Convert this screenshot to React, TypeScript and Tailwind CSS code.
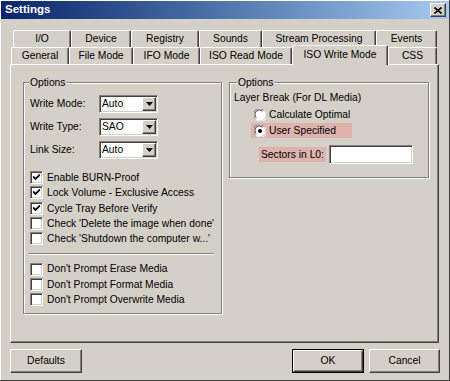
import clsx from "clsx";

const raised =
  "border border-t-white border-l-white border-r-[#404040] border-b-[#404040] shadow-[inset_-1px_-1px_0_#808080]";
const sunken =
  "border border-t-[#808080] border-l-[#808080] border-r-white border-b-white shadow-[inset_1px_1px_0_#404040,inset_-1px_-1px_0_#d4d0c8]";
const etched = "border border-[#808080] shadow-[inset_1px_1px_0_#fff,1px_1px_0_#fff]";

const backTabs = [
  { label: "I/O", w: "w-[58px]" },
  { label: "Device", w: "w-[60px]" },
  { label: "Registry", w: "w-[68px]" },
  { label: "Sounds", w: "w-[63px]" },
  { label: "Stream Processing", w: "w-[114px]" },
  { label: "Events", w: "w-[61px]" },
];

const frontTabs = [
  { label: "General", w: "w-[58px]" },
  { label: "File Mode", w: "w-[64px]" },
  { label: "IFO Mode", w: "w-[67px]" },
  { label: "ISO Read Mode", w: "w-[92px]" },
  { label: "ISO Write Mode", w: "w-[96px]", active: true },
  { label: "CSS", w: "w-[49px]" },
];

const Tab = ({ label, w, active }: { label: string; w: string; active?: boolean }) => (
  <div
    className={clsx(
      "flex items-center justify-center whitespace-nowrap bg-[#d4d0c8] rounded-t-[2px] border-l border-t border-r border-l-white border-t-white border-r-[#404040] shadow-[inset_-1px_0_0_#808080]",
      w,
      active ? "relative z-10 -mt-[2px] h-[20px] pb-[2px]" : "h-[17px]"
    )}
  >
    {label}
  </div>
);

const Combo = ({ value }: { value: string }) => (
  <div className={clsx("flex h-[18px] w-[59px] bg-white", sunken)}>
    <span className="flex-1 pl-[2px] pt-[1px] leading-[14px]">{value}</span>
    <div className={clsx("m-[1px] flex w-[14px] items-center justify-center bg-[#d4d0c8]", raised)}>
      <svg width="7" height="4" viewBox="0 0 7 4">
        <path d="M0 0h7L3.5 4z" fill="#000" />
      </svg>
    </div>
  </div>
);

const Check = ({ label, checked }: { label: string; checked?: boolean }) => (
  <div className="flex h-[15.3px] items-center">
    <div className={clsx("flex h-[13px] w-[13px] shrink-0 items-center justify-center bg-white", sunken)}>
      {checked && (
        <svg width="7" height="7" viewBox="0 0 7 7">
          <path d="M0 2.5l2.5 2.5L7 0.5" fill="none" stroke="#000" strokeWidth="1.8" />
        </svg>
      )}
    </div>
    <span className="ml-[4px] whitespace-nowrap">{label}</span>
  </div>
);

const Radio = ({ checked }: { checked?: boolean }) => (
  <svg width="12" height="12" viewBox="0 0 12 12" className="shrink-0">
    <circle cx="6" cy="6" r="5.5" fill="#fff" />
    <path d="M1.2 9.5A5.5 5.5 0 0 1 9.5 1.2" fill="none" stroke="#808080" strokeWidth="1" />
    <path d="M2.3 8.6A4.3 4.3 0 0 1 8.6 2.3" fill="none" stroke="#404040" strokeWidth="1" />
    <path d="M10.8 2.5A5.5 5.5 0 0 1 2.5 10.8" fill="none" stroke="#fff" strokeWidth="1" />
    {checked && <circle cx="6" cy="6" r="2" fill="#000" />}
  </svg>
);

const Button = ({ label, w, isDefault }: { label: string; w: string; isDefault?: boolean }) => (
  <div className={clsx("h-[24px]", w, isDefault && "border border-black")}>
    <div className={clsx("flex h-full items-center justify-center bg-[#d4d0c8]", raised)}>{label}</div>
  </div>
);

export default function App() {
  return (
    <div className="flex h-[381px] w-[450px] flex-col bg-[#d4d0c8] font-['Liberation_Sans',Arial,sans-serif] text-[10.3px] text-black shadow-[inset_-1px_-1px_0_#404040,inset_1px_1px_0_#fff]">
      {/* title bar */}
      <div className="mx-[1px] mt-[1px] flex h-[18px] items-center bg-gradient-to-r from-[#0a246a] to-[#a6caf0] pl-[4px] pr-[3px]">
        <span className="flex-1 text-[11.5px] font-bold text-white">Settings</span>
        <div className={clsx("flex h-[14px] w-[16px] items-center justify-center bg-[#d4d0c8]", raised)}>
          <svg width="8" height="7" viewBox="0 0 8 7">
            <path d="M0.5 0.5l7 6M7.5 0.5l-7 6" stroke="#000" strokeWidth="1.6" />
          </svg>
        </div>
      </div>

      {/* tabs */}
      <div className="mt-[11px] flex h-[17px] items-start pl-[13px]">
        {backTabs.map((t) => (
          <Tab key={t.label} {...t} />
        ))}
      </div>
      <div className="flex h-[17px] items-start pl-[11px]">
        {frontTabs.map((t) => (
          <Tab key={t.label} {...t} />
        ))}
      </div>

      {/* panel */}
      <div className="mx-[10px] flex h-[279px] w-[429px] items-start gap-[7px] border border-t-white border-l-white border-r-[#404040] border-b-[#404040] pl-[12px] pt-[17px] shadow-[inset_-1px_-1px_0_#808080]">
        <div className={clsx("h-[232px] w-[199px]", etched)}>
          <div className="-mt-[7px] ml-[5px] w-fit bg-[#d4d0c8] px-[1px] leading-[13px]">Options</div>
          <div className="mt-[6px] flex flex-col gap-[5px] pl-[6px]">
            {[
              ["Write Mode:", "Auto"],
              ["Write Type:", "SAO"],
              ["Link Size:", "Auto"],
            ].map(([l, v]) => (
              <div key={l} className="flex h-[18px] items-center">
                <span className="w-[69px]">{l}</span>
                <Combo value={v} />
              </div>
            ))}
          </div>
          <div className="mt-[11px] flex flex-col pl-[6px]">
            <Check label="Enable BURN-Proof" checked />
            <Check label="Lock Volume - Exclusive Access" checked />
            <Check label="Cycle Tray Before Verify" checked />
            <Check label="Check 'Delete the image when done'" />
            <Check label="Check 'Shutdown the computer w...'" />
          </div>
          <div className="ml-[5px] mr-[7px] mt-[7px] h-[2px] border-t border-t-[#808080] border-b border-b-white" />
          <div className="mt-[6px] flex flex-col pl-[6px]">
            <Check label="Don't Prompt Erase Media" />
            <Check label="Don't Prompt Format Media" />
            <Check label="Don't Prompt Overwrite Media" />
          </div>
        </div>

        <div className={clsx("h-[96px] w-[200px]", etched)}>
          <div className="-mt-[7px] ml-[7px] w-fit bg-[#d4d0c8] px-[1px] leading-[13px]">Options</div>
          <div className="ml-[4px] mt-[2px] leading-[14px]">Layer Break (For DL Media)</div>
          <div className="ml-[24px] mt-[2px] flex h-[15px] items-center gap-[3px]">
            <Radio />
            <span>Calculate Optimal</span>
          </div>
          <div className="ml-[21px] mt-[1px] flex h-[15px] w-[101px] items-center gap-[3px] bg-[#deb3ae] pl-[3px]">
            <Radio checked />
            <span>User Specified</span>
          </div>
          <div className="ml-[29px] mt-[7px] flex items-center gap-[3px]">
            <span className="flex h-[15px] w-[67px] items-center whitespace-nowrap bg-[#deb3ae] pl-[2px]">
              Sectors in L0:
            </span>
            <div className={clsx("h-[19px] w-[84px] bg-white", sunken)} />
          </div>
        </div>
      </div>

      {/* buttons */}
      <div className="mt-[6px] flex px-[10px]">
        <Button label="Defaults" w="w-[72px]" />
        <div className="flex-1" />
        <Button label="OK" w="w-[72px]" isDefault />
        <div className="w-[5px]" />
        <Button label="Cancel" w="w-[71px]" />
      </div>
    </div>
  );
}
